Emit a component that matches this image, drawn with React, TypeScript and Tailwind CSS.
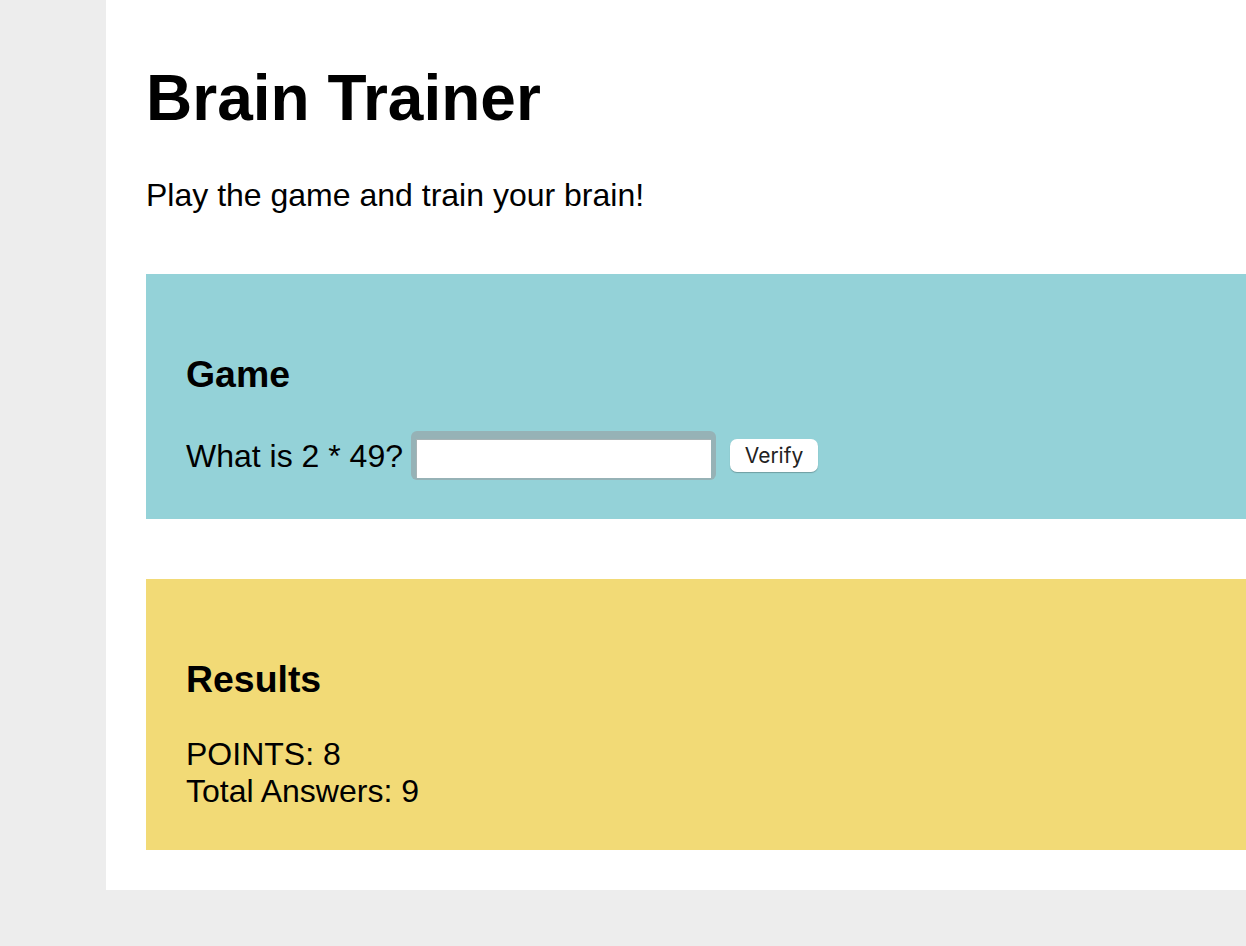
import React, { useState } from "react";

const App: React.FC = () => {
  const [answer, setAnswer] = useState("");

  return (
    <div
      className="h-screen w-full overflow-hidden bg-[#ededed] text-black"
      style={{ fontFamily: '"Liberation Sans", Arial, sans-serif' }}
    >
      <div className="ml-[106px] w-[1300px] bg-white pl-10 pb-10 text-[32px] leading-[1.15]">
        <h1 className="pt-[62px] text-[64px] font-bold leading-[1.15]">Brain Trainer</h1>
        <p className="mt-[41px]">Play the game and train your brain!</p>

        {/* game box */}
        <section className="mt-[61px] bg-[#94d2d8] px-10 pt-10 pb-[39px]">
          <h3 className="mt-[39px] mb-[35px] text-[37.44px] font-bold leading-[1.15]">Game</h3>
          <div className="flex items-center">
            <span>What is 2 * 49?</span>
            <div className="ml-[8px] h-[49px] w-[305px] rounded-[6px] bg-[#96b2b6] p-[5px]">
              <input
                type="text"
                value={answer}
                onChange={(e) => setAnswer(e.target.value)}
                className="h-full w-full border-t border-l border-[#a7b3b5] bg-white px-1 text-[20px] outline-none"
              />
            </div>
            <button
              className="ml-[14px] h-[33px] w-[88px] rounded-[7px] bg-white text-[21px] text-[#222] shadow-[0_1px_1px_rgba(0,0,0,0.25)]"
              style={{ fontFamily: 'Inter, "Noto Sans", sans-serif' }}
            >
              Verify
            </button>
          </div>
        </section>

        {/* results box */}
        <section className="mt-[60px] bg-[#f2da76] px-10 py-10">
          <h3 className="mt-[39px] mb-[35px] text-[37.44px] font-bold leading-[1.15]">Results</h3>
          <div>POINTS: 8</div>
          <div>Total Answers: 9</div>
        </section>
      </div>
    </div>
  );
};

export default App;
